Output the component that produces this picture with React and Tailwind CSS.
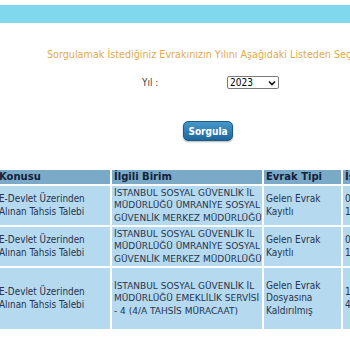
import React from 'react';

const rows = [
  {
    konu: ['E-Devlet Üzerinden', 'Alınan Tahsis Talebi'],
    birim: ['İSTANBUL SOSYAL GÜVENLİK İL', 'MÜDÜRLÜĞÜ ÜMRANİYE SOSYAL', 'GÜVENLİK MERKEZ MÜDÜRLÜĞÜ'],
    tip: ['Gelen Evrak', 'Kayıtlı'],
    tarih: ['07.03.2023', '10:42'],
    h: 'h-[39px]',
  },
  {
    konu: ['E-Devlet Üzerinden', 'Alınan Tahsis Talebi'],
    birim: ['İSTANBUL SOSYAL GÜVENLİK İL', 'MÜDÜRLÜĞÜ ÜMRANİYE SOSYAL', 'GÜVENLİK MERKEZ MÜDÜRLÜĞÜ'],
    tip: ['Gelen Evrak', 'Kayıtlı'],
    tarih: ['09.03.2023', '11:05'],
    h: 'h-[39px]',
  },
  {
    konu: ['E-Devlet Üzerinden', 'Alınan Tahsis Talebi'],
    birim: ['İSTANBUL SOSYAL GÜVENLİK İL', 'MÜDÜRLÜĞÜ EMEKLİLİK SERVİSİ', '- 4 (4/A TAHSİS MÜRACAAT)'],
    tip: ['Gelen Evrak', 'Dosyasına', 'Kaldırılmış'],
    tarih: ['12.03.2023', '4'],
    h: 'h-[61px]',
  },
];

const COND = { fontFamily: '"DejaVu Sans Condensed", "DejaVu Sans", Verdana, sans-serif' };
const REG = { fontFamily: '"DejaVu Sans", Verdana, sans-serif' };

const Lines = ({ items }) => (
  <div className="flex flex-col">
    {items.map((t, i) => (
      <span key={i} className="whitespace-nowrap">{t}</span>
    ))}
  </div>
);

export default function App() {
  return (
    <div className="w-[350px] h-[350px] overflow-hidden bg-white" style={COND}>
      <div className="mt-[5px] h-[18px] bg-[#80d8ec]" />

      <div className="mt-[25px] pl-[47px] whitespace-nowrap text-[10.7px] leading-[14px] text-[#e2a94e]">
        Sorgulamak İstediğiniz Evrakınızın Yılını Aşağıdaki Listeden Seçiniz
      </div>

      <div className="mt-[14px] flex items-center h-[13px]">
        <span className="ml-[142px] w-[85px] text-[10px] text-[#444]">Yıl :</span>
        <div className="w-[52px] h-[13px] border border-[#7a7a7a] rounded-[2px] bg-white flex items-center justify-between px-[2px]">
          <span className="text-[10px] leading-none text-black">2023</span>
          <svg width="8" height="6" viewBox="0 0 8 6">
            <path d="M1 1.5 L4 4.5 L7 1.5" fill="none" stroke="#111" strokeWidth="1.6" />
          </svg>
        </div>
      </div>

      <div className="mt-[32px] ml-[183px] w-[50px] h-[20px] rounded-[5px] border border-[#1b5b88] bg-gradient-to-b from-[#4598cc] to-[#1e679b] shadow-[0_1px_2px_rgba(0,0,0,0.3)] flex items-center justify-center">
        <span className="text-white text-[10px] font-bold">Sorgula</span>
      </div>

      <table className="mt-[27px] ml-[-10px] w-[435px] table-fixed border-separate border-spacing-[2px] text-[10px] leading-[12.5px] text-[#26344e]">
        <thead>
          <tr className="bg-[#7ba9c8] text-[#13223a] font-bold" style={REG}>
            <td className="w-[118px] h-[14px] pl-[7px] pr-[2px]">Konusu</td>
            <td className="w-[150px] px-[2px]">İlgili Birim</td>
            <td className="w-[77px] px-[2px]">Evrak Tipi</td>
            <td className="w-[80px] px-[2px] whitespace-nowrap overflow-hidden">İşlem Tarihi</td>
          </tr>
        </thead>
        <tbody>
          {rows.map((r, i) => (
            <tr key={i} className="bg-[#b5d9ef]">
              <td className={`${r.h} pl-[7px] pr-[2px] text-[9.9px]`}><Lines items={r.konu} /></td>
              <td className="px-[2px] text-[9px]" style={REG}><Lines items={r.birim} /></td>
              <td className="px-[2px]"><Lines items={r.tip} /></td>
              <td className="px-[2px]"><Lines items={r.tarih} /></td>
            </tr>
          ))}
        </tbody>
      </table>
    </div>
  );
}
